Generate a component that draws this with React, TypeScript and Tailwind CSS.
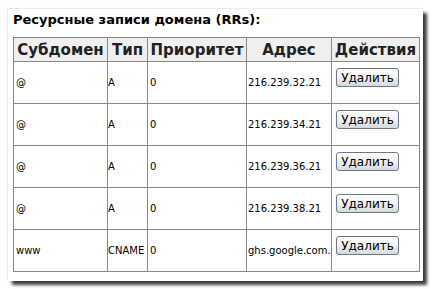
const RECORDS = [
  { sub: '@', type: 'A', prio: '0', addr: '216.239.32.21' },
  { sub: '@', type: 'A', prio: '0', addr: '216.239.34.21' },
  { sub: '@', type: 'A', prio: '0', addr: '216.239.36.21' },
  { sub: '@', type: 'A', prio: '0', addr: '216.239.38.21' },
  { sub: 'www', type: 'CNAME', prio: '0', addr: 'ghs.google.com.' },
]

const HEADERS = ['Субдомен', 'Тип', 'Приоритет', 'Адрес', 'Действия']

function DeleteButton() {
  return (
    <button
      type="button"
      className="w-[63px] h-[19px] rounded-[3px] border border-[#6d7a86] bg-gradient-to-b from-white via-[#f1f2f2] to-[#d3d9dc] text-[12px] leading-none text-black font-['DejaVu_Sans',sans-serif]"
    >
      Удалить
    </button>
  )
}

export default function App() {
  return (
    <div className="w-[435px] h-[289px] bg-white pt-[9px] pl-[8px] font-['DejaVu_Sans',sans-serif]">
      <div className="w-[415px] h-[272px] bg-white pt-[3px] pl-[5px] pr-[4px] shadow-[0_0_2px_rgba(0,0,0,0.25),4px_4px_3px_rgba(0,0,0,0.75)]">
        <div className="text-[13px] leading-[16px] font-bold text-black mb-[9px]">
          Ресурсные записи домена (RRs):
        </div>
        <table className="table-fixed border-collapse w-[406px] text-[10px] text-black">
          <colgroup>
            <col className="w-[94px]" />
            <col className="w-[40px]" />
            <col className="w-[99px]" />
            <col className="w-[85px]" />
            <col className="w-[88px]" />
          </colgroup>
          <thead>
            <tr className="bg-[#efefef]">
              {HEADERS.map((h) => (
                <th
                  key={h}
                  className="border border-[#888888] h-[24px] p-0 text-center text-[15px] leading-[20px] font-bold text-[#222222] whitespace-nowrap"
                >
                  {h}
                </th>
              ))}
            </tr>
          </thead>
          <tbody>
            {RECORDS.map((r, i) => (
              <tr key={i}>
                <td className="border border-[#888888] h-[42px] px-[2px] py-0 align-middle">{r.sub}</td>
                <td className="border border-[#888888] h-[42px] px-[0px] py-0 align-middle">{r.type}</td>
                <td className="border border-[#888888] h-[42px] px-[2px] py-0 align-middle">{r.prio}</td>
                <td className="border border-[#888888] h-[42px] px-[1px] py-0 align-middle whitespace-nowrap">{r.addr}</td>
                <td className="border border-[#888888] h-[42px] pl-[4px] py-0 align-middle">
                  <div className="pb-[10px]">
                    <DeleteButton />
                  </div>
                </td>
              </tr>
            ))}
          </tbody>
        </table>
      </div>
    </div>
  )
}
